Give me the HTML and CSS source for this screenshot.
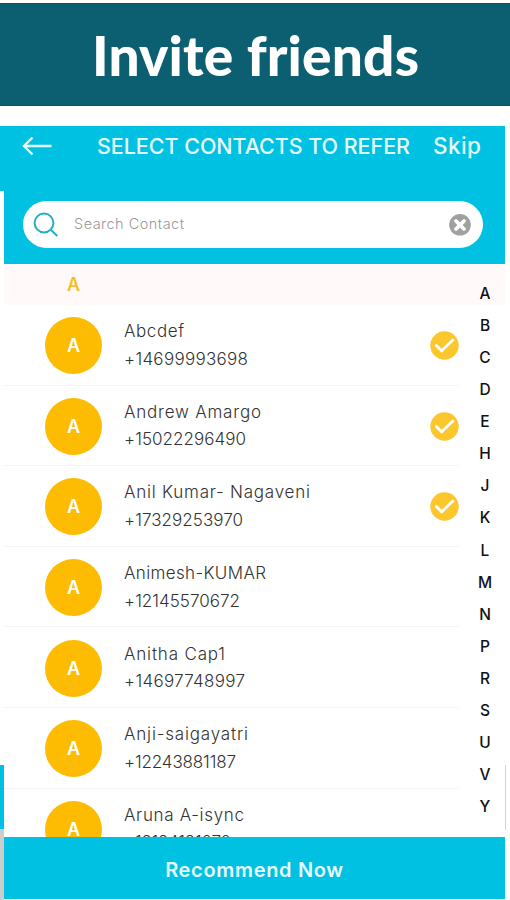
FILE: index.html
```
<!DOCTYPE html>
<html lang="en">
<head>
    <meta charset="UTF-8">
    <title>Invite friends</title>
    <link rel="stylesheet" href="styles.css">
</head>
<body>
<h1 class="banner"><span>Invite friends</span></h1>
<div class="phone">
    <div class="edge edge-left"></div>
    <div class="app">
        <header>
            <div class="topbar">
                <svg class="back" width="30" height="20" viewBox="0 0 30 20" fill="none" stroke="#e6fbff" stroke-width="2.400"><path d="M29.500 10H2M10.500 1.500L2 10l8.500 8.500"/></svg>
                <h2><span>SELECT CONTACTS TO REFER</span></h2>
                <a class="skip"><span>Skip</span></a>
            </div>
            <div class="search">
                <svg width="26" height="26" viewBox="0 0 26 26" fill="none" stroke="#22afc2" stroke-width="2"><circle cx="11" cy="11" r="9.400"/><path d="M17.800 17.800L24.300 24"/></svg>
                <span class="placeholder">Search Contact</span>
                <svg class="clear" width="22" height="22" viewBox="0 0 22 22" fill="none"><circle cx="11" cy="10.800" r="10.800" fill="#a0a0a0"/><path d="M7 7l8 8M15 7l-8 8" stroke="#fff" stroke-width="3.800" stroke-linecap="round"/></svg>
            </div>
        </header>
        <div class="section">A</div>
        <div class="content">
            <ul class="contacts"></ul>
            <ul class="index"></ul>
        </div>
        <button class="recommend"><span>Recommend Now</span></button>
    </div>
    <div class="edge edge-right"></div>
</div>

<script type="text/javascript">
    // name, phone, selected, width of name, width of phone
    var list = [
        ['Abcdef', '+14699993698', true, 60, 124],
        ['Andrew Amargo', '+15022296490', true, 137, 122],
        ['Anil Kumar- Nagaveni', '+17329253970', true, 186, 119],
        ['Animesh-KUMAR', '+12145570672', false, 142, 116],
        ['Anitha Cap1', '+14697748997', false, 101, 121],
        ['Anji-saigayatri', '+12243881187', false, 124, 112],
        ['Aruna A-isync', '+12124121070', false, 120, 107]
    ];
    var letters = 'ABCDEHJKLMNPRSUVY';
    var contacts = document.querySelector('.contacts');
    var index = document.querySelector('.index');
    var check = '<svg class="check" width="29" height="29" viewBox="0 0 29 29" fill="none"><circle cx="14.500" cy="14.500" r="14.200" fill="#fcc62d"/><path d="M5.500 13.800l6.200 6L23.700 8.300" stroke="#fff" stroke-width="2.800"/></svg>';

    // letter spacing that gives the text its width
    function fit(el, width) {
        var n = el.textContent.length;
        el.style.letterSpacing = (width - el.getBoundingClientRect().width) / (n - 1) + 'px';
    }

    for (var i = 0; i < list.length; i++) {
        var li = document.createElement('li');
        li.innerHTML = '<div class="avatar">A</div><div class="info"><p><span>' + list[i][0] + '</span></p><p><span>' + list[i][1] + '</span></p></div>' + (list[i][2] ? check : '');
        contacts.appendChild(li);
        var spans = li.querySelectorAll('span');
        fit(spans[0], list[i][3]);
        fit(spans[1], list[i][4]);
    }
    for (var j = 0; j < letters.length; j++) {
        var item = document.createElement('li');
        item.innerHTML = letters[j];
        index.appendChild(item);
    }
    fit(document.querySelector('.banner span'), 327);
    fit(document.querySelector('h2 span'), 313);
    fit(document.querySelector('.skip span'), 48);
    fit(document.querySelector('.placeholder'), 110);
    fit(document.querySelector('.recommend span'), 178);
</script>
</body>
</html>
```
FILE: styles.css
```
*{
    padding: 0;
    margin: 0;
    box-sizing: border-box;
}
body{
    height: 900px;
    overflow: hidden;
    background-color: #fff;
    font-family: Inter, "Liberation Sans", sans-serif;
}
ul{
    list-style: none;
}
span{
    white-space: nowrap;
}
.banner{
    margin-top: 3px;
    height: 103px;
    line-height: 103px;
    padding-left: 92px;
    background-color: #0c5f70;
    border-top: 1px solid #0b4f68;
    border-bottom: 1px solid #0b4f68;
    color: #fff;
    font-family: Lato, "Open Sans", sans-serif;
    font-size: 55px;
    font-weight: 900;
}
.phone{
    display: grid;
    grid-template-columns: 4px 501px 5px;
    height: 774px;
    margin-top: 20px;
}
.edge-left{
    background: linear-gradient(#00c1e1 65px, #fff 65px, #fff 639px, #00c1e1 639px, #00c1e1 703px, #ccc 703px);
}
.edge-right{
    border-left: 1px solid #a9e4e2;
    height: 65px;
    margin-top: 639px;
}
.app{
    display: flex;
    flex-direction: column;
    height: 773px;
}
header{
    flex: none;
    height: 138px;
    background-color: #00c1e1;
}
.topbar{
    display: flex;
    align-items: center;
    height: 39px;
    padding-left: 18px;
    color: #e6fbff;
}
.topbar h2{
    width: 336px;
    margin-left: 45px;
    font-size: 21.5px;
    font-weight: 500;
}
.skip{
    font-size: 22.5px;
    font-weight: 500;
}
.search{
    display: flex;
    align-items: center;
    height: 47px;
    margin: 36px 22px 0 19px;
    padding: 0 12px 0 10px;
    background-color: #fff;
    border-radius: 24px;
}
.placeholder{
    margin-left: 15px;
    padding-bottom: 2px;
    color: #999;
    font-size: 14.5px;
    font-weight: 300;
}
.clear{
    margin-left: auto;
}
.section{
    flex: none;
    height: 41px;
    line-height: 41px;
    padding-left: 63px;
    background-color: #fffaf9;
    color: #f7bd26;
    font-size: 18px;
    font-weight: 600;
}
.content{
    display: flex;
    flex: 1;
    min-height: 0;
}
.contacts{
    width: 455px;
    overflow: hidden;
}
.contacts li{
    display: flex;
    align-items: center;
    height: 80.6px;
    padding-top: 2px;
    padding-left: 41px;
    border-bottom: 1px solid #f4f4f4;
}
.avatar{
    width: 57px;
    height: 57px;
    line-height: 57px;
    border-radius: 50%;
    background-color: #fdbc02;
    color: #fff;
    font-size: 18px;
    font-weight: 600;
    text-align: center;
}
.info{
    margin-left: 22px;
    color: #333;
    font-size: 17px;
    font-weight: 300;
    line-height: 27.5px;
}
.check{
    margin-left: auto;
}
.index{
    width: 46px;
    margin-top: -27px;
    padding-left: 6px;
    color: #111;
    font-size: 15.5px;
    font-weight: 500;
    text-align: center;
}
.index li{
    height: 32.07px;
    line-height: 32px;
}
.recommend{
    flex: none;
    height: 62px;
    padding-top: 4px;
    border: none;
    background-color: #00c1e1;
    color: #e6fbff;
    font-family: inherit;
    font-size: 20px;
    font-weight: 600;
}
```
